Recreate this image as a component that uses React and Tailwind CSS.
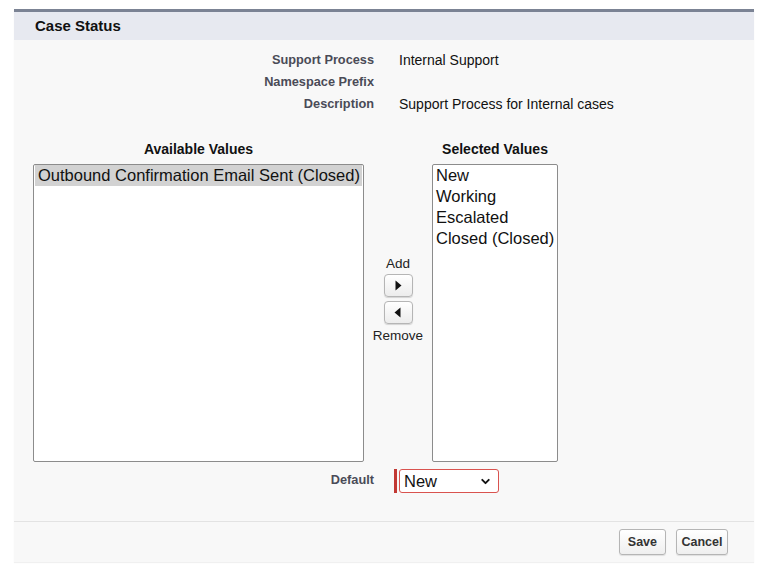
import { ChevronDown } from "lucide-react";

const fieldRows = [
  { label: "Support Process", value: "Internal Support" },
  { label: "Namespace Prefix", value: "" },
  { label: "Description", value: "Support Process for Internal cases" },
];

const available = ["Outbound Confirmation Email Sent (Closed)"];
const selected = ["New", "Working", "Escalated", "Closed (Closed)"];

function ArrowButton({ dir }) {
  return (
    <button className="w-[29px] h-[23px] flex items-center justify-center rounded-[4px] border border-[#b5b5b5] bg-gradient-to-b from-white to-[#ececec] shadow-[0_1px_1px_rgba(0,0,0,0.15)]">
      <svg width="8" height="11" viewBox="0 0 8 11">
        {dir === "right" ? (
          <polygon points="1.5,0.5 7.5,5.5 1.5,10.5" fill="#111" />
        ) : (
          <polygon points="6.5,0.5 0.5,5.5 6.5,10.5" fill="#111" />
        )}
      </svg>
    </button>
  );
}

export default function App() {
  return (
    <div className="w-[768px] h-[571px] bg-white pt-[9px] pl-[14px] font-['Liberation_Sans',Arial,sans-serif]">
      <div className="w-[740px] border-t-[3px] border-[#7b8394] bg-[#f8f8f8] shadow-[0_1px_1px_rgba(0,0,0,0.06)]">
        {/* HEADER */}
        <div className="h-[28px] bg-[#e7e9f0] flex items-center pl-[21px]">
          <h2 className="text-[15px] font-bold text-[#111]">Case Status</h2>
        </div>

        {/* FIELDS */}
        <div className="pt-[9px] flex flex-col">
          {fieldRows.map((row) => (
            <div key={row.label} className="flex items-center h-[22px]">
              <span className="w-[360px] text-right text-[12.75px] font-bold text-[#4a4b57]">{row.label}</span>
              <span className="pl-[25px] text-[14px] text-[#111]">{row.value}</span>
            </div>
          ))}
        </div>

        {/* DUAL LIST */}
        <div className="flex mt-[24px] pl-[19px]">
          <div className="flex flex-col items-center w-[331px]">
            <p className="text-[14px] font-bold text-[#111] h-[20px] leading-[20px]">Available Values</p>
            <div className="mt-[5px] w-[331px] h-[298px] border border-[#8c8c8c] rounded-[2px] bg-white px-[1px]">
              {available.map((v) => (
                <div key={v} className="bg-[#d2d2d2] text-[16.5px] leading-[21px] pl-[3px] text-[#111]">{v}</div>
              ))}
            </div>
          </div>

          <div className="w-[68px] flex flex-col items-center pt-[117px]">
            <span className="text-[13.5px] text-[#222] leading-[16px] mb-[2px]">Add</span>
            <ArrowButton dir="right" />
            <div className="h-[4px]" />
            <ArrowButton dir="left" />
            <span className="text-[13.5px] text-[#222] leading-[16px] mt-[4px]">Remove</span>
          </div>

          <div className="flex flex-col items-center w-[126px]">
            <p className="text-[14px] font-bold text-[#111] h-[20px] leading-[20px]">Selected Values</p>
            <div className="mt-[5px] w-[126px] h-[298px] border border-[#8c8c8c] rounded-[2px] bg-white px-[1px]">
              {selected.map((v) => (
                <div key={v} className="text-[16.5px] leading-[21px] pl-[2px] text-[#111] whitespace-nowrap">{v}</div>
              ))}
            </div>
          </div>
        </div>

        {/* DEFAULT */}
        <div className="flex items-center mt-[7px] h-[24px]">
          <span className="w-[360px] text-right text-[12.75px] font-bold text-[#4a4b57] self-start pt-[1px]">Default</span>
          <div className="ml-[20px] flex items-stretch h-[24px]">
            <div className="w-[3px] bg-[#c23934]" />
            <div className="ml-[2px] w-[100px] flex items-center justify-between border border-[#d9534f] rounded-[3px] bg-white pl-[4px] pr-[6px]">
              <span className="text-[16.5px] text-[#111]">New</span>
              <ChevronDown size={13} strokeWidth={3.5} className="text-[#111]" />
            </div>
          </div>
        </div>

        {/* FOOTER */}
        <div className="mt-[28px] border-t border-[#e3e3e3] h-[41px] flex items-center justify-end gap-[10px] pr-[26px]">
          <button className="h-[26px] px-[8px] rounded-[3px] border border-[#b5b5b5] bg-gradient-to-b from-white to-[#efefef] text-[12.5px] font-bold text-[#333] shadow-[0_1px_1px_rgba(0,0,0,0.1)]">
            Save
          </button>
          <button className="h-[26px] px-[4.5px] rounded-[3px] border border-[#b5b5b5] bg-gradient-to-b from-white to-[#efefef] text-[12.5px] font-bold text-[#333] shadow-[0_1px_1px_rgba(0,0,0,0.1)]">
            Cancel
          </button>
        </div>
      </div>
    </div>
  );
}
